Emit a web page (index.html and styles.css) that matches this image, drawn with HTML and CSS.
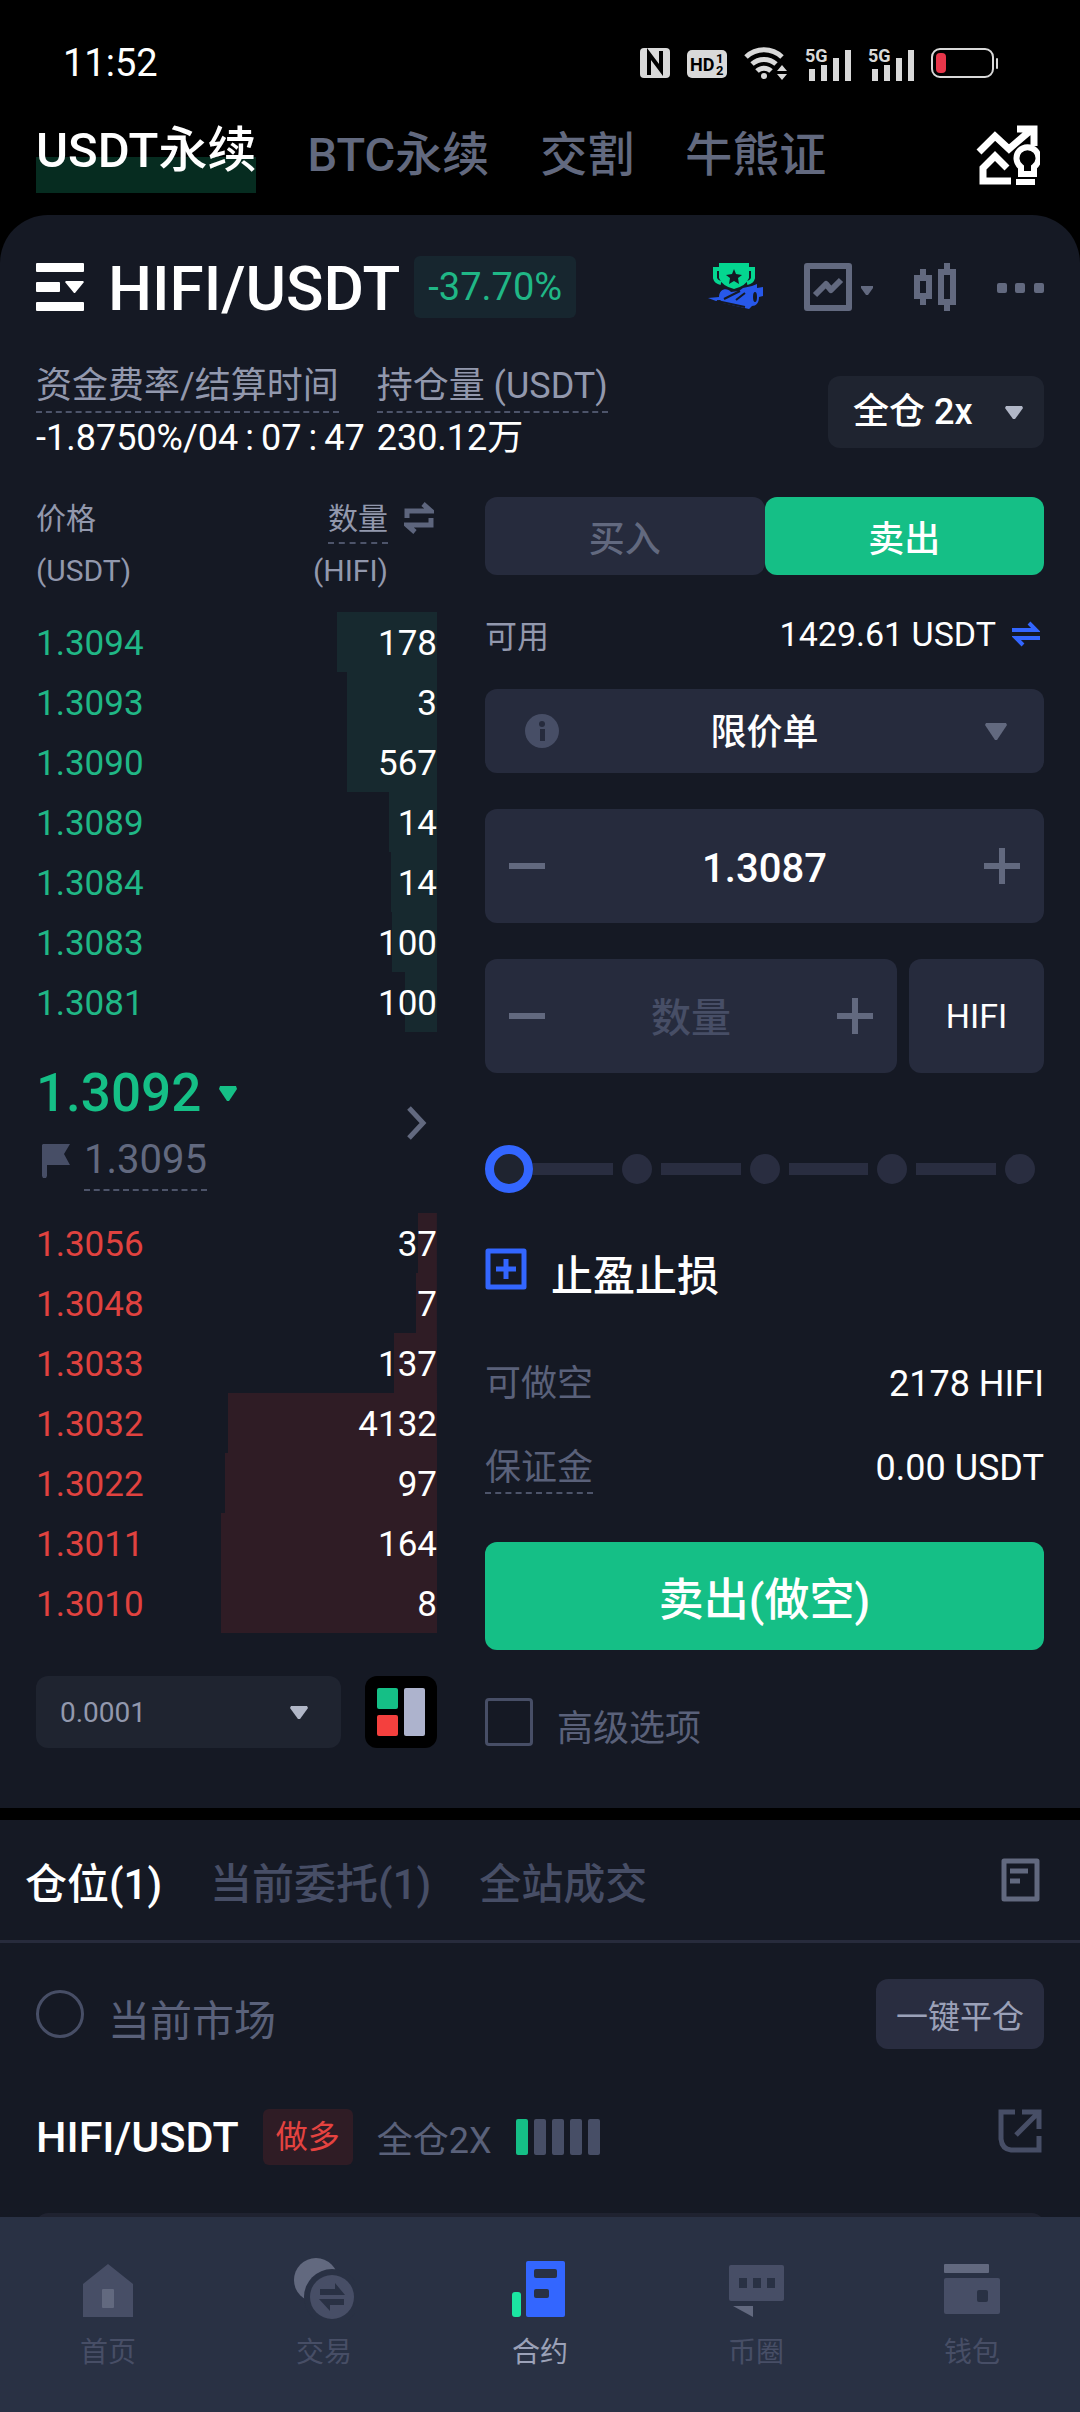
FILE: index.html
```html
<!DOCTYPE html>
<html lang="zh-CN">

<head>
    <meta charset="UTF-8">
    <meta name="viewport" content="width=device-width, initial-scale=1.0">
    <title>HIFI/USDT 永续合约</title>
    <link rel="stylesheet" href="styles.css">
</head>

<body>
    <div class="app">
        <!-- 状态栏 -->
        <div class="status">
            <span class="clock">11:52</span>
            <div class="status-icons">
                <svg width="30" height="32" viewBox="0 0 30 32">
                    <rect y="1" width="30" height="30" rx="4" fill="#d9d9d9"/>
                    <path d="M9 28V7l12 16V4" fill="none" stroke="#000" stroke-width="4"/>
                </svg>
                <svg width="40" height="32" viewBox="0 0 40 32">
                    <rect y="3" width="40" height="28" rx="5" fill="#d9d9d9"/>
                    <text class="hd" x="3" y="24">HD</text>
                    <text class="hd-small" x="29" y="16">1</text>
                    <text class="hd-small" x="29" y="28">2</text>
                </svg>
                <svg width="44" height="34" viewBox="0 0 44 34">
                    <g fill="none" stroke="#d9d9d9" stroke-width="5">
                        <path d="M2 11a26 26 0 0 1 36 0M8 18a18 18 0 0 1 24 0M13 25a10 10 0 0 1 14 0"/>
                    </g>
                    <circle cx="20" cy="30" r="3" fill="#d9d9d9"/>
                    <path d="M33 25l5-6 5 6zM33 28h10l-5 6z" fill="#d9d9d9"/>
                </svg>
                <svg width="46" height="36" viewBox="0 0 46 36">
                    <text class="net" x="0" y="17">5G</text>
                    <path d="M4 24h6v12H4zM16 20h6v16h-6zM28 13h6v23h-6zM40 5h6v31h-6z" fill="#d9d9d9"/>
                </svg>
                <svg width="46" height="36" viewBox="0 0 46 36">
                    <text class="net" x="0" y="17">5G</text>
                    <path d="M4 24h6v12H4zM16 20h6v16h-6zM28 13h6v23h-6zM40 5h6v31h-6z" fill="#d9d9d9"/>
                </svg>
                <svg width="68" height="32" viewBox="0 0 68 32">
                    <rect x="1" y="2" width="61" height="28" rx="8" fill="none" stroke="#d9d9d9" stroke-width="2"/>
                    <rect x="5" y="6" width="10" height="20" rx="4" fill="#e8364a"/>
                    <rect x="65" y="11" width="2" height="11" rx="1" fill="#d9d9d9"/>
                </svg>
            </div>
        </div>

        <!-- 顶部分类 -->
        <nav class="types">
            <a href="#usdt" class="active">USDT永续</a>
            <a href="#btc">BTC永续</a>
            <a href="#delivery">交割</a>
            <a href="#warrant">牛熊证</a>
            <button class="icon-btn types-tool" aria-label="行情学院">
                <svg width="64" height="62" viewBox="0 0 64 62">
                    <g fill="none" stroke="#fff" stroke-width="7">
                        <path d="M3 28L19 12l14 13L55 6M41 5h17v17M35 57H7V44l12-12 12 12"/>
                        <path d="M45 50v-7a11 11 0 1 1 13 0v7z" stroke-width="6"/>
                    </g>
                    <path d="M40 55h19v6H40z" fill="#fff"/>
                </svg>
            </button>
        </nav>

        <main class="content">
            <section class="panel trade">
                <!-- 交易对 -->
                <div class="pair">
                    <button class="icon-btn" aria-label="切换交易对">
                        <svg width="48" height="48" viewBox="0 0 48 48" fill="#fff">
                            <rect width="48" height="9" rx="1"/>
                            <rect y="19" width="24" height="10" rx="1"/>
                            <rect y="39" width="48" height="9" rx="1"/>
                            <path d="M30 18h17l1 1-9 11h-1l-9-11z"/>
                        </svg>
                    </button>
                    <h1>HIFI/USDT</h1>
                    <span class="change">-37.70%</span>
                    <div class="pair-tools">
                        <button class="icon-btn" aria-label="交易大赛">
                            <svg width="56" height="54" viewBox="0 0 56 54">
                                <path d="M12 3h30v15q-3 8-15 11-12-3-15-11z" fill="#04d690"/>
                                <path d="M13 9H8v9q1 4 6 5M41 9h5v9q-1 4-6 5" fill="none" stroke="#04d690" stroke-width="4"/>
                                <path d="M27 9l2 5 6 1-4 3 1 6-5-3-5 3 1-6-4-3 6-1z" fill="#151924"/>
                                <path d="M1 38l11-1c0-8 8-10 12-5l8-1 4-3 9-2 5-2v4l6-1v9l-4 1c0 6-3 9-7 9l-3 3-26-6-3-3-4 1z" fill="#2758ea"/>
                                <path d="M10 41l28 6M17 39l16-8M29 40l9-7" fill="none" stroke="#151924" stroke-width="2"/>
                                <ellipse cx="48" cy="37" rx="2" ry="5" fill="#151924"/>
                            </svg>
                        </button>
                        <button class="icon-btn chart-btn" aria-label="图表">
                            <svg width="69" height="48" viewBox="0 0 69 48">
                                <path d="M3 3h42v42H3zM11 32l11-11 5 6 10-10" fill="none" stroke="#62697f" stroke-width="6" stroke-linejoin="round"/>
                                <path d="M57 23h12v2l-5 7h-2l-5-7z" fill="#62697f"/>
                            </svg>
                        </button>
                        <button class="icon-btn" aria-label="K线">
                            <svg width="42" height="48" viewBox="0 0 42 48">
                                <path d="M3 15h12v18H3zM27 9h12v30H27z" fill="none" stroke="#62697f" stroke-width="6"/>
                                <path d="M6 6h6v8H6zM6 34h6v8H6zM30 0h6v8h-6zM30 40h6v8h-6z" fill="#62697f"/>
                            </svg>
                        </button>
                        <button class="icon-btn" aria-label="更多">
                            <svg width="47" height="48" viewBox="0 0 47 48" fill="#62697f">
                                <rect y="20" width="10" height="10" rx="2"/>
                                <rect x="18" y="20" width="10" height="10" rx="2"/>
                                <rect x="37" y="20" width="10" height="10" rx="2"/>
                            </svg>
                        </button>
                    </div>
                </div>

                <!-- 资金费率 -->
                <div class="funding">
                    <div>
                        <span class="dashed">资金费率/结算时间</span>
                        <p>-1.8750%/04<i>:</i>07<i>:</i>47</p>
                    </div>
                    <div>
                        <span class="dashed">持仓量 (USDT)</span>
                        <p>230.12万</p>
                    </div>
                    <button class="leverage">全仓 2x
                        <svg width="18" height="13" viewBox="0 0 18 13"><path d="M1 0h16l1 2-8 11H8L0 2z" fill="#b1b7c7"/></svg>
                    </button>
                </div>

                <div class="trade-body">
                    <!-- 盘口 -->
                    <div class="book">
                        <table class="asks">
                            <thead>
                                <tr>
                                    <th>价格<br>(USDT)</th>
                                    <th>
                                        <div class="amount-head">
                                            <span><u>数量</u><br>(HIFI)</span>
                                            <svg width="30" height="32" viewBox="0 0 30 32"><path d="M3 16V9h24L19 2M27 16v7H3l8 7" fill="none" stroke="#5d657d" stroke-width="5"/></svg>
                                        </div>
                                    </th>
                                </tr>
                            </thead>
                            <tbody>
                                <tr style="--depth: 25%"><td>1.3094</td><td>178</td></tr>
                                <tr style="--depth: 22.5%"><td>1.3093</td><td>3</td></tr>
                                <tr style="--depth: 22.5%"><td>1.3090</td><td>567</td></tr>
                                <tr style="--depth: 12%"><td>1.3089</td><td>14</td></tr>
                                <tr style="--depth: 11.5%"><td>1.3084</td><td>14</td></tr>
                                <tr style="--depth: 11.3%"><td>1.3083</td><td>100</td></tr>
                                <tr style="--depth: 8%"><td>1.3081</td><td>100</td></tr>
                            </tbody>
                        </table>

                        <a href="#price" class="last">
                            <div>
                                <div class="last-price">1.3092
                                    <svg width="18" height="15" viewBox="0 0 18 15"><path d="M1 0h16l1 3-8 12H8L0 3z" fill="#15bf86"/></svg>
                                </div>
                                <div class="mark-price">
                                    <svg width="28" height="34" viewBox="0 0 28 34"><path d="M0 1l1-1h27l-6 10 6 11H5v11l-1 2H1l-1-2z" fill="#474e66"/></svg>
                                    <span>1.3095</span>
                                </div>
                            </div>
                            <svg width="20" height="34" viewBox="0 0 20 34"><path d="M2 2l14 15L2 32" fill="none" stroke="#62697f" stroke-width="5"/></svg>
                        </a>

                        <table class="bids">
                            <tbody>
                                <tr style="--depth: 4.7%"><td>1.3056</td><td>37</td></tr>
                                <tr style="--depth: 5.2%"><td>1.3048</td><td>7</td></tr>
                                <tr style="--depth: 10.7%"><td>1.3033</td><td>137</td></tr>
                                <tr style="--depth: 52.1%"><td>1.3032</td><td>4132</td></tr>
                                <tr style="--depth: 52.9%"><td>1.3022</td><td>97</td></tr>
                                <tr style="--depth: 53.9%"><td>1.3011</td><td>164</td></tr>
                                <tr style="--depth: 53.9%"><td>1.3010</td><td>8</td></tr>
                            </tbody>
                        </table>

                        <div class="book-tools">
                            <div class="step">
                                <select aria-label="价格精度">
                                    <option>0.0001</option>
                                    <option>0.001</option>
                                </select>
                                <svg width="18" height="13" viewBox="0 0 18 13"><path d="M1 0h16l1 2-8 11H8L0 2z" fill="#b1b7c7"/></svg>
                            </div>
                            <button class="book-layout" aria-label="盘口样式">
                                <svg width="48" height="48" viewBox="0 0 48 48">
                                    <rect width="21" height="21" rx="2" fill="#15bf86"/>
                                    <rect y="27" width="21" height="21" rx="2" fill="#f4403e"/>
                                    <rect x="27" width="21" height="48" rx="2" fill="#adb3cd"/>
                                </svg>
                            </button>
                        </div>
                    </div>

                    <!-- 下单 -->
                    <form class="order">
                        <div class="sides">
                            <button type="button">买入</button>
                            <button type="button" class="active">卖出</button>
                        </div>
                        <div class="available">
                            <span>可用</span>
                            <b>1429.61 USDT</b>
                            <button type="button" class="icon-btn" aria-label="划转">
                                <svg width="28" height="26" viewBox="0 0 28 26"><path d="M0 9h24L17 2M28 17H4l7 7" fill="none" stroke="#3366ff" stroke-width="4"/></svg>
                            </button>
                        </div>
                        <div class="field order-type">
                            <svg width="40" height="34" viewBox="0 0 40 34">
                                <circle cx="20" cy="17" r="17" fill="#474e66"/>
                                <path d="M18 15h5v12h-5z" fill="#262b3d"/>
                                <circle cx="20" cy="10" r="3" fill="#262b3d"/>
                            </svg>
                            <select aria-label="委托类型">
                                <option>限价单</option>
                                <option>市价单</option>
                            </select>
                            <svg width="40" height="17" viewBox="0 0 40 17"><path d="M10 0h20l1 2-10 15h-2L9 2z" fill="#62697f"/></svg>
                        </div>
                        <div class="field stepper">
                            <button type="button" class="icon-btn minus" aria-label="减少价格"></button>
                            <input type="text" value="1.3087" aria-label="价格">
                            <button type="button" class="icon-btn plus" aria-label="增加价格"></button>
                        </div>
                        <div class="amount">
                            <div class="field stepper">
                                <button type="button" class="icon-btn minus" aria-label="减少数量"></button>
                                <input type="text" placeholder="数量" aria-label="数量">
                                <button type="button" class="icon-btn plus" aria-label="增加数量"></button>
                            </div>
                            <button type="button" class="field unit">HIFI</button>
                        </div>
                        <div class="slider">
                            <ul>
                                <li></li>
                                <li></li>
                                <li></li>
                                <li></li>
                            </ul>
                            <input type="range" min="0" max="100" step="25" value="0" aria-label="仓位比例">
                        </div>
                        <button type="button" class="tpsl">
                            <svg width="42" height="42" viewBox="0 0 42 42"><path d="M3 3h36v36H3zM11 21h20M21 11v20" fill="none" stroke="#3366ff" stroke-width="5" stroke-linejoin="round"/></svg>
                            <span>止盈止损</span>
                        </button>
                        <dl>
                            <dt>可做空</dt>
                            <dd>2178 HIFI</dd>
                            <dt><span class="dashed">保证金</span></dt>
                            <dd>0.00 USDT</dd>
                        </dl>
                        <button type="button" class="submit">卖出(做空)</button>
                        <label class="check"><input type="checkbox"><span>高级选项</span></label>
                    </form>
                </div>
            </section>

            <!-- 仓位 -->
            <section class="panel positions">
                <nav class="position-tabs">
                    <a href="#positions" class="active">仓位(1)</a>
                    <a href="#orders">当前委托(1)</a>
                    <a href="#deals">全站成交</a>
                    <button class="icon-btn" aria-label="历史记录">
                        <svg width="39" height="44" viewBox="0 0 39 44" fill="none" stroke="#62697f" stroke-width="5"><path d="M3 3h33v38H3z" stroke-linejoin="round"/><path d="M9 13h18M9 23h10"/></svg>
                    </button>
                </nav>
                <div class="filter">
                    <label class="check"><input type="radio"><span>当前市场</span></label>
                    <button class="close-all">一键平仓</button>
                </div>
                <div class="position">
                    <h2>HIFI/USDT</h2>
                    <span class="long">做多</span>
                    <span class="mode">全仓2X</span>
                    <div class="risk"><i class="on"></i><i></i><i></i><i></i><i></i></div>
                    <button class="icon-btn share" aria-label="分享">
                        <svg width="44" height="44" viewBox="0 0 44 44"><path d="M17 3H3v27q1 10 10 11h28V27M24 3h17v17M40 4L18 26" fill="none" stroke="#474e66" stroke-width="5"/></svg>
                    </button>
                </div>
                <div class="position-card"></div>
            </section>
        </main>

        <!-- 底部导航 -->
        <nav class="tabbar">
            <a href="#home">
                <svg width="62" height="62" viewBox="0 0 62 62"><path d="M31 6l25 20v33H6V26z" fill="#474e66"/><rect x="25" y="31" width="12" height="19" rx="1" fill="#62697f"/></svg>
                首页
            </a>
            <a href="#trade">
                <svg width="62" height="62" viewBox="0 0 62 62">
                    <circle cx="23" cy="22" r="22" fill="#62697f"/>
                    <circle cx="39" cy="39" r="28" fill="#293144"/>
                    <circle cx="39" cy="39" r="22" fill="#474e66"/>
                    <path d="M27 31h15v-6l10 12H27zM51 41H26l11 12v-6h14z" fill="#293144"/>
                </svg>
                交易
            </a>
            <a href="#futures" class="active">
                <svg width="62" height="62" viewBox="0 0 62 62">
                    <rect x="3" y="34" width="9" height="25" rx="3" fill="#1be6a2"/>
                    <rect x="17" y="3" width="39" height="56" rx="2" fill="#3366ff"/>
                    <rect x="25" y="11" width="23" height="9" rx="2" fill="#293144"/>
                    <rect x="25" y="31" width="15" height="9" rx="2" fill="#293144"/>
                </svg>
                合约
            </a>
            <a href="#circle">
                <svg width="62" height="62" viewBox="0 0 62 62">
                    <rect x="4" y="7" width="55" height="36" rx="2" fill="#474e66"/>
                    <path d="M14 20h8v10h-8zM28 20h8v10h-8zM42 20h8v10h-8z" fill="#293144"/>
                    <path d="M8 48h20v11z" fill="#62697f"/>
                </svg>
                币圈
            </a>
            <a href="#wallet">
                <svg width="62" height="62" viewBox="0 0 62 62">
                    <rect x="3" y="6" width="45" height="9" rx="1" fill="#62697f"/>
                    <rect x="3" y="20" width="56" height="36" rx="2" fill="#474e66"/>
                    <rect x="36" y="32" width="11" height="12" rx="2" fill="#293144"/>
                </svg>
                钱包
            </a>
        </nav>
    </div>
</body>

</html>
```
FILE: styles.css
```css
* {
    box-sizing: border-box;
    margin: 0;
    padding: 0;
}

body {
    background-color: #000;
    color: #fff;
    font-family: Roboto, "Noto Sans CJK SC", sans-serif;
    font-size: 36px;
}

a {
    color: inherit;
    text-decoration: none;
}

ul {
    list-style: none;
}

i {
    font-style: normal;
}

svg {
    display: block;
    flex: none;
}

button,
input,
select {
    border: none;
    outline: none;
    background: none;
    color: inherit;
    font: inherit;
}

select {
    appearance: none;
}

button {
    cursor: pointer;
}

.icon-btn {
    flex: none;
}

.app {
    display: flex;
    flex-direction: column;
    height: 100vh;
}

/* 状态栏 */
.status {
    display: flex;
    flex: none;
    justify-content: space-between;
    align-items: flex-end;
    height: 95px;
    padding: 0 81px 14px 63px;
}

.clock {
    font-size: 38px;
    line-height: 36px;
}

.status-icons {
    display: flex;
    align-items: center;
    gap: 17px;
}

.hd {
    font-size: 18px;
    font-weight: bold;
}

.hd-small {
    font-size: 13px;
    font-weight: bold;
}

.net {
    fill: #d9d9d9;
    font-size: 18px;
    font-weight: bold;
}

/* 顶部分类 */
.types {
    display: flex;
    flex: none;
    align-items: center;
    gap: 51px;
    height: 120px;
    padding: 0 40px 0 36px;
    color: #62697f;
    font-size: 47px;
    font-weight: 500;
    line-height: 76px;
}

.types .active {
    padding-bottom: 8px;
    background: linear-gradient(#062c20, #062c20) bottom / 100% 36px no-repeat;
    color: #fff;
    font-size: 49px;
    line-height: 68px;
}

.types-tool {
    margin-left: auto;
}

.content {
    flex: 1;
    min-height: 0;
    overflow-y: auto;
    scrollbar-width: none;
}

.panel {
    background-color: #151924;
}

.trade {
    padding: 41px 36px 60px;
    border-radius: 48px 48px 0 0;
}

/* 交易对 */
.pair {
    display: flex;
    align-items: center;
    height: 62px;
}

.pair h1 {
    margin: 0 14px 0 24px;
    padding-top: 4px;
    font-size: 62px;
    font-weight: 500;
    line-height: 62px;
}

.change {
    padding: 0 14px;
    border-radius: 6px;
    background-color: #17262f;
    color: #20b786;
    font-size: 38px;
    line-height: 62px;
}

.pair-tools {
    display: flex;
    align-items: center;
    gap: 41px;
    margin-left: auto;
}

/* 资金费率 */
.funding {
    display: flex;
    align-items: center;
    gap: 12px;
    margin-top: 43px;
    line-height: 50px;
}

.dashed {
    display: inline-block;
    border-bottom: 2px dashed #4d546a;
}

.funding .dashed {
    color: #9298ad;
}

.funding p i {
    padding: 0 7px;
}

.leverage {
    display: flex;
    align-items: center;
    justify-content: space-between;
    width: 216px;
    height: 72px;
    margin-left: auto;
    padding: 0 21px 0 25px;
    border-radius: 12px;
    background-color: #1f2430;
    font-weight: 500;
}

.trade-body {
    display: grid;
    grid-template-columns: 401fr 559fr;
    gap: 48px;
    margin-top: 30px;
}

/* 盘口 */
.book table {
    width: 100%;
    border-collapse: collapse;
}

.book thead tr {
    height: 119px;
}

.book th {
    color: #9298ad;
    font-size: 30px;
    font-weight: normal;
    line-height: 52px;
    text-align: left;
    vertical-align: top;
}

.amount-head {
    display: flex;
    justify-content: flex-end;
    gap: 16px;
    padding-right: 3px;
    text-align: right;
}

.amount-head u {
    display: inline-block;
    border-bottom: 2px dashed #4d546a;
    line-height: 46px;
    text-decoration: none;
}

.amount-head svg {
    margin-top: 9px;
}

.book tbody tr {
    height: 60px;
    background: linear-gradient(var(--tint), var(--tint)) right / var(--depth) 100% no-repeat;
}

.book td {
    padding-top: 3px;
    font-size: 35px;
    line-height: 42px;
}

.book td:last-child {
    text-align: right;
}

.asks {
    --tint: #17292f;
}

.bids {
    --tint: #2f1c25;
}

.asks td:first-child {
    color: #20b786;
}

.bids td:first-child {
    color: #e0423f;
}

.last {
    display: flex;
    align-items: center;
    justify-content: space-between;
    height: 181px;
    padding-right: 10px;
}

.last > div {
    padding-top: 7px;
}

.last-price {
    display: flex;
    align-items: center;
    gap: 18px;
    color: #15bf86;
    font-size: 53px;
    font-weight: 500;
    line-height: 64px;
}

.mark-price {
    display: flex;
    align-items: center;
    gap: 14px;
    margin-top: 6px;
    padding-left: 6px;
    color: #62697f;
    font-size: 40px;
}

.mark-price span {
    border-bottom: 2px dashed #4d546a;
    line-height: 58px;
}

.book-tools {
    display: flex;
    gap: 24px;
    margin-top: 43px;
}

.step {
    display: flex;
    flex: 1;
    align-items: center;
    height: 72px;
    padding: 0 33px 0 24px;
    border-radius: 12px;
    background-color: #1f2430;
}

.step select {
    flex: 1;
    color: #9298ad;
    font-size: 28px;
}

.book-layout {
    padding: 12px;
    border-radius: 12px;
    background-color: #000;
}

/* 下单 */
.order {
    display: flex;
    flex-direction: column;
    padding-top: 4px;
}

.sides {
    display: flex;
}

.sides button {
    flex: 1;
    height: 78px;
    border-radius: 12px;
    background-color: #262b3d;
    color: #62697f;
    font-weight: 500;
}

.sides .active {
    background-color: #15bf86;
    color: #fff;
}

.available {
    display: flex;
    align-items: center;
    height: 114px;
    padding: 4px 4px 0 0;
    font-size: 34px;
}

.available span {
    flex: 1;
    color: #9298ad;
    font-size: 32px;
}

.available b {
    margin-right: 16px;
    font-weight: normal;
}

.field {
    display: flex;
    align-items: center;
    border-radius: 12px;
    background-color: #262b3d;
}

.order-type {
    height: 84px;
    padding: 0 28px 0 37px;
}

.order-type select {
    flex: 1;
    margin-right: 9px;
    padding-top: 4px;
    font-weight: 500;
    text-align-last: center;
}

.stepper {
    flex: 1;
    height: 114px;
    margin-top: 36px;
    padding: 0 24px;
}

.stepper input {
    flex: 1;
    width: 0;
    padding-top: 4px;
    font-size: 40px;
    font-weight: 500;
    text-align: center;
}

.stepper input::placeholder {
    color: #474e66;
}

.order > .stepper {
    flex: none;
}

.minus,
.plus {
    width: 36px;
    height: 36px;
    background: linear-gradient(#62697f, #62697f) center / 100% 6px no-repeat;
}

.plus {
    background: linear-gradient(#62697f, #62697f) center / 100% 6px no-repeat, linear-gradient(#62697f, #62697f) center / 6px 100% no-repeat;
}

.amount {
    display: flex;
    gap: 12px;
}

.unit {
    justify-content: center;
    width: 135px;
    height: 114px;
    margin-top: 36px;
    font-size: 34px;
}

/* 仓位滑块 刻度在下层 range在上层 */
.slider {
    position: relative;
    height: 48px;
    margin-top: 72px;
}

.slider ul {
    display: flex;
    align-items: center;
    gap: 9px;
    height: 48px;
    padding: 0 9px 0 48px;
}

.slider li {
    display: flex;
    flex: 1;
    align-items: center;
    gap: 9px;
}

.slider li::before {
    content: '';
    flex: 1;
    height: 12px;
    background-color: #292d40;
}

.slider li::after {
    content: '';
    width: 30px;
    height: 30px;
    border-radius: 50%;
    background-color: #292d40;
}

.slider input {
    position: absolute;
    top: 0;
    left: 0;
    width: 100%;
    height: 48px;
    appearance: none;
    cursor: pointer;
}

.slider input::-webkit-slider-thumb {
    appearance: none;
    width: 48px;
    height: 48px;
    border: 9px solid #3366ff;
    border-radius: 50%;
    background-color: #1f2430;
}

.tpsl {
    display: flex;
    align-items: center;
    gap: 24px;
    height: 56px;
    margin-top: 48px;
    font-size: 42px;
    font-weight: 500;
}

.tpsl span,
.check span {
    padding-top: 6px;
}

.order dl {
    display: grid;
    grid-template-columns: auto 1fr;
    row-gap: 36px;
    margin-top: 63px;
    line-height: 48px;
}

.order dt {
    color: #5a617a;
}

.order dd {
    text-align: right;
}

.submit {
    height: 108px;
    margin-top: 48px;
    border-radius: 12px;
    background-color: #15bf86;
    font-size: 45px;
    font-weight: 500;
}

.check {
    display: flex;
    align-items: center;
    gap: 24px;
    height: 48px;
    color: #5a617a;
}

.check input {
    width: 48px;
    height: 48px;
    border: 3px solid #474e66;
    border-radius: 4px;
    appearance: none;
}

.check input[type="radio"] {
    border-radius: 50%;
}

.order .check {
    margin-top: 48px;
}

/* 仓位 */
.positions {
    margin-top: 12px;
}

.position-tabs {
    display: flex;
    align-items: center;
    gap: 48px;
    height: 123px;
    padding: 0 40px 0 25px;
    border-bottom: 3px solid #272b3c;
    color: #474e66;
    font-size: 42px;
    font-weight: 500;
}

.position-tabs .active {
    color: #fff;
}

.position-tabs .icon-btn {
    margin-left: auto;
}

.filter {
    display: flex;
    align-items: center;
    justify-content: space-between;
    padding: 36px 36px 0;
}

.filter .check {
    font-size: 42px;
}

.close-all {
    width: 168px;
    height: 70px;
    border-radius: 12px;
    background-color: #292d40;
    color: #9ba1b8;
    font-size: 32px;
}

.position {
    display: flex;
    align-items: center;
    height: 56px;
    margin: 60px 38px 48px 36px;
}

.position h2 {
    font-size: 43px;
    font-weight: 500;
}

.long {
    margin: 0 24px;
    padding: 0 13px;
    border-radius: 6px;
    background-color: #2f1c25;
    color: #e54340;
    font-size: 32px;
    line-height: 56px;
}

.mode {
    color: #5a617a;
}

.risk {
    display: flex;
    flex: 1;
    gap: 6px;
    margin-left: 24px;
}

.risk i {
    width: 12px;
    height: 36px;
    border-radius: 2px;
    background-color: #474e66;
}

.risk .on {
    background-color: #15bf86;
}

.share {
    align-self: flex-start;
}

.position-card {
    height: 240px;
    margin: 0 36px;
    border-radius: 12px;
    background-color: #1f2230;
}

/* 底部导航 */
.tabbar {
    display: flex;
    flex: none;
    height: 195px;
    padding-top: 41px;
    background-color: #293144;
    color: #474e66;
    font-size: 28px;
    line-height: 40px;
}

.tabbar a {
    display: flex;
    flex: 1;
    flex-direction: column;
    align-items: center;
    gap: 13px;
}

.tabbar .active {
    color: #9ba1b8;
}
```
